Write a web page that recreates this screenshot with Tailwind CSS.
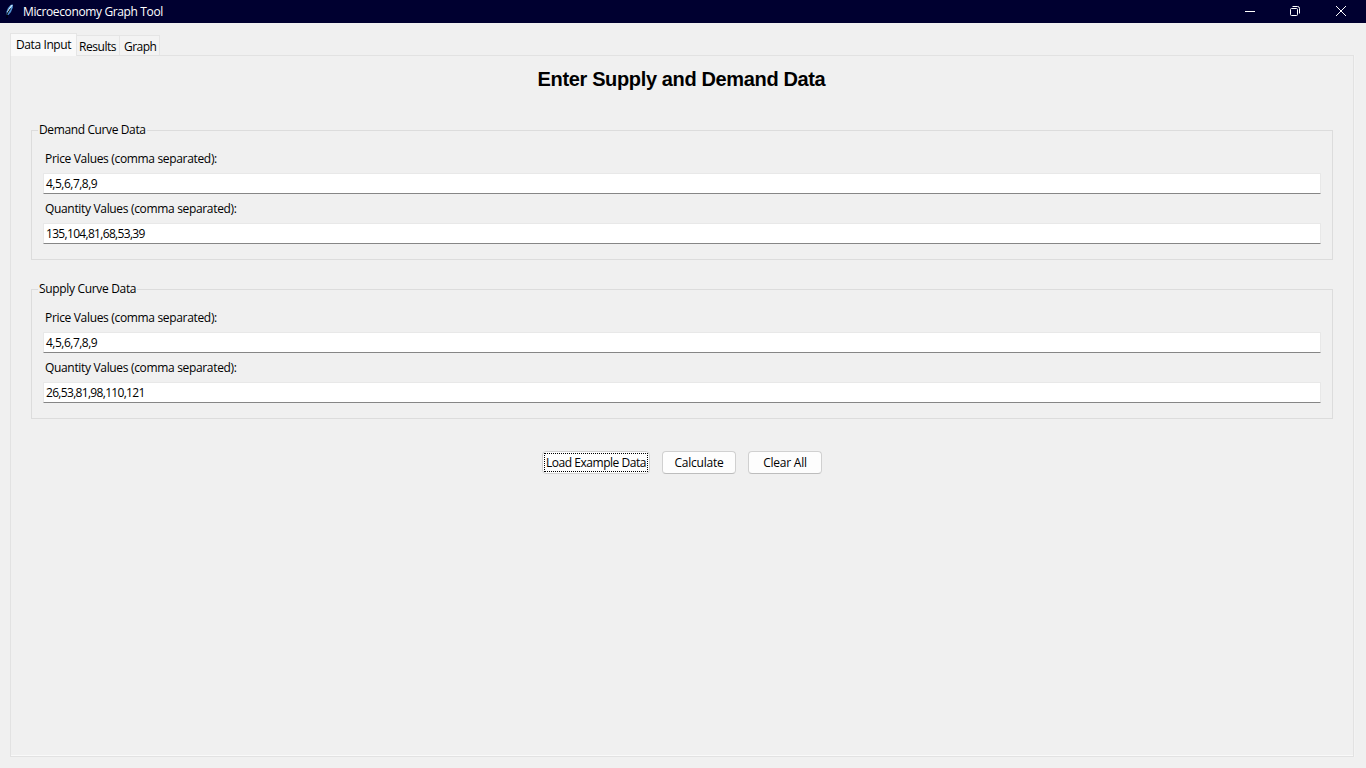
<!DOCTYPE html>
<html lang="en">
<head>
<meta charset="utf-8">
<title>Microeconomy Graph Tool</title>
<script src="https://cdn.jsdelivr.net/npm/@tailwindcss/browser@4"></script>
</head>
<body class="flex h-screen w-screen flex-col overflow-hidden bg-[#f0f0f0] font-['Open_Sans','Noto_Sans',sans-serif] text-[12px] leading-4 tracking-[-0.33px] whitespace-nowrap text-black">
<header class="flex h-[23px] shrink-0 items-center bg-[#000030] text-white">
  <svg class="ml-[4px] h-4 w-3 -translate-y-[2px]" viewBox="0 0 12 16" fill="none"><path d="M2.500 13V9.500L4 6L6.500 3L9 2.500L8.800 5.500L7 10L4.500 13Z" fill="#4f8fd0"/><path d="M8.200 3L6 6L3.500 10.500" stroke="#d8f0ff" stroke-width="1.200"/><path d="M3 16V12L6.500 6.500" stroke="#000"/></svg>
  <h1 class="ml-[7px] tracking-[-0.37px]">Microeconomy Graph Tool</h1>
  <div class="ml-auto flex items-center pr-[19px]">
    <svg class="mr-[33px] h-3 w-3 -translate-y-px" viewBox="0 0 12 12" stroke="#fff"><path d="M1 6.500H11"/></svg>
    <svg class="mr-[34px] h-3 w-3 -translate-y-px" viewBox="0 0 12 12" fill="none" stroke="#fff"><rect x="1.500" y="3.500" width="7" height="7" rx="1"/><path d="M3.500 1.500H8.500Q10.500 1.500 10.500 3.500V8.500"/></svg>
    <svg class="h-3 w-3 -translate-y-px" viewBox="0 0 12 12" stroke="#fff"><path d="M1 1L11 11M11 1L1 11"/></svg>
  </div>
</header>
<nav class="mt-[10px] ml-[10px] flex h-[22px] shrink-0 items-end tracking-[-0.45px]">
  <div class="relative -mb-px h-[23px] w-[67px] border border-b-0 border-[#e5e5e5] bg-[#f9f9f9] pt-[3px] pl-[5px] tracking-[-0.4px]">Data Input</div>
  <div class="h-5 w-[43px] border-t border-r border-[#e5e5e5] bg-[#f3f3f3] pt-[3px] pl-[2px]">Results</div>
  <div class="h-5 w-10 border-t border-r border-[#e5e5e5] bg-[#f3f3f3] pt-[3px] pl-1 tracking-[-0.55px]">Graph</div>
</nav>
<main class="mr-3 mb-[11px] ml-[10px] flex flex-1 flex-col border border-[#e2e2e2] px-5 shadow-[inset_0_-1px_#f9f9f9,1px_0_#f3f3f3]">
  <h2 class="mt-[11px] pr-px text-center font-['Liberation_Sans',Arial,sans-serif] text-[20px] leading-6 font-bold tracking-[-0.36px]">Enter Supply and Demand Data</h2>
  <section class="mt-[39px] h-[130px] border border-[#dcdcdc] px-[11px]">
    <h3 class="-mt-[9px] -ml-[5px] w-fit bg-[#f0f0f0] px-px tracking-[-0.38px]">Demand Curve Data</h3>
    <div class="mt-[13px] ml-[2px]">Price Values (comma separated):</div>
    <div class="mt-[6px] h-[21px] rounded-[1px] border border-[#e8e8e8] border-b-[#868686] bg-white pt-[2px] pl-[2px] tracking-[-0.5px]">4,5,6,7,8,9</div>
    <div class="mt-[7px] ml-[2px]">Quantity Values (comma separated):</div>
    <div class="mt-[6px] h-[21px] rounded-[1px] border border-[#e8e8e8] border-b-[#868686] bg-white pt-[2px] pl-[2px] tracking-[-0.68px]">135,104,81,68,53,39</div>
  </section>
  <section class="mt-[29px] h-[130px] border border-[#dcdcdc] px-[11px]">
    <h3 class="-mt-[9px] -ml-[5px] w-fit bg-[#f0f0f0] px-px">Supply Curve Data</h3>
    <div class="mt-[13px] ml-[2px]">Price Values (comma separated):</div>
    <div class="mt-[6px] h-[21px] rounded-[1px] border border-[#e8e8e8] border-b-[#868686] bg-white pt-[2px] pl-[2px] tracking-[-0.5px]">4,5,6,7,8,9</div>
    <div class="mt-[7px] ml-[2px]">Quantity Values (comma separated):</div>
    <div class="mt-[6px] h-[21px] rounded-[1px] border border-[#e8e8e8] border-b-[#868686] bg-white pt-[2px] pl-[2px] tracking-[-0.68px]">26,53,81,98,110,121</div>
  </section>
  <div class="mt-8 flex justify-center gap-3">
    <button class="h-[23px] w-[108px] rounded-[4px] border border-[#d0d0d0] bg-[#fdfdfd] p-px tracking-[-0.47px]"><span class="flex h-[19px] w-full items-center justify-center border border-dotted border-black">Load Example Data</span></button>
    <button class="h-[23px] w-[74px] rounded-[4px] border border-[#d0d0d0] border-b-[#bdbdbd] bg-[#fdfdfd] tracking-[-0.22px]">Calculate</button>
    <button class="h-[23px] w-[74px] rounded-[4px] border border-[#d0d0d0] border-b-[#bdbdbd] bg-[#fdfdfd] tracking-[-0.22px]">Clear All</button>
  </div>
</main>
</body>
</html>
